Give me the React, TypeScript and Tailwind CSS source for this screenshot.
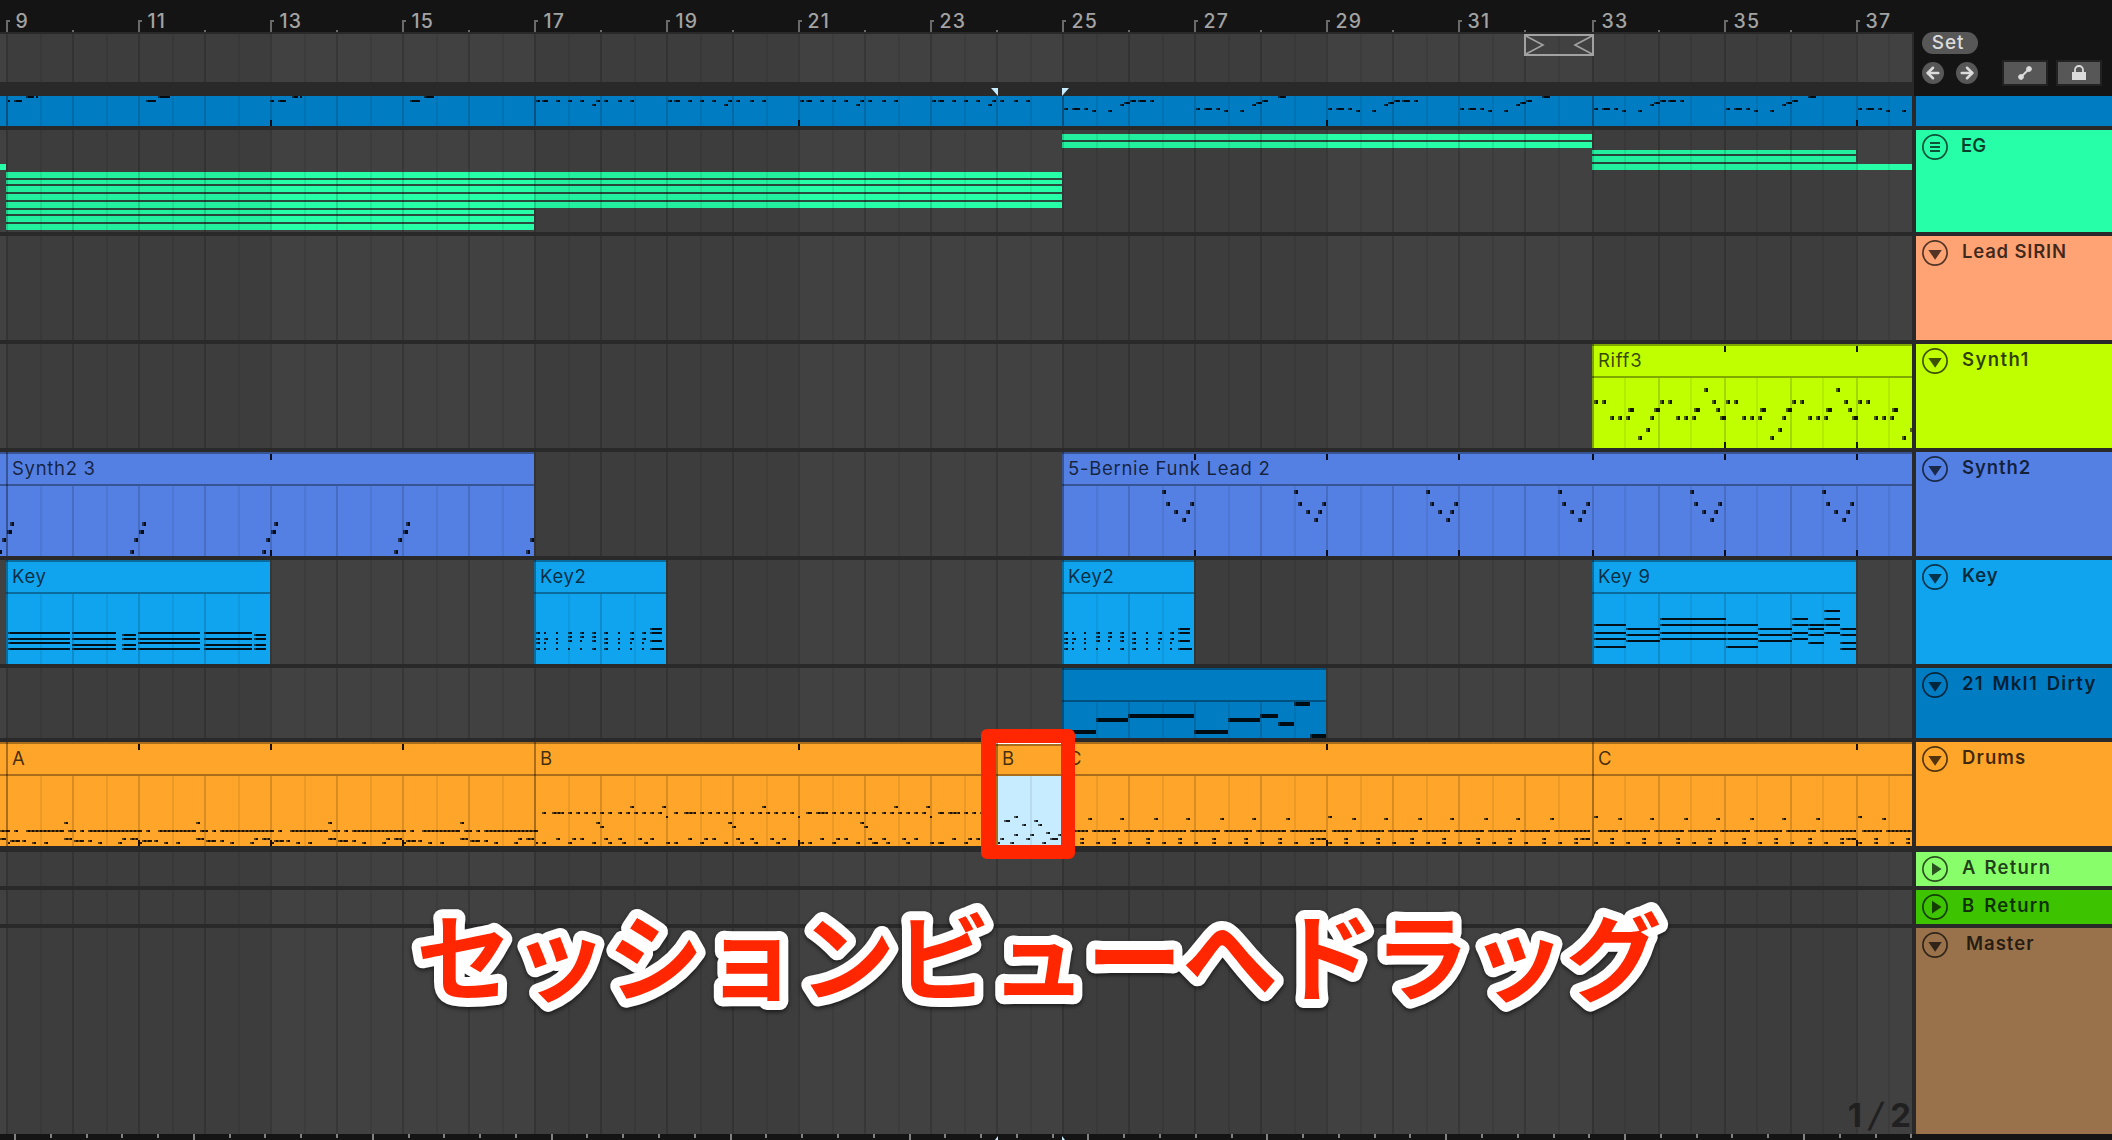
import { ArrowLeft, ArrowRight } from "lucide-react";

// [x, y, width] of one note
type Note = [number, number, number];

type Clip = {
    name?: string;
    start: number;
    end: number;
    bare?: boolean;
    open?: boolean;
    selected?: boolean;
};

type Track = {
    name: string;
    top: number;
    height: number;
    color: string;
    panel: string;
    gap: string;
    label?: string;
    icon?: "down" | "right" | "menu";
    clips?: Clip[];
    notes?: Note[];
    noteHeight?: number;
    ticks?: number[];
};

const LANE_WIDTH = 1912;

const barX = (bar: number) => 2 * Math.floor(3.49 + 33.022 * (bar - 9));

const range = (from: number, to: number, step = 1) => {
    const out: number[] = [];
    for (let i = from; i <= to; i += step) out.push(i);
    return out;
};

const shift = (notes: Note[], dx: number): Note[] => notes.map(([x, y, w]) => [x + dx, y, w]);

const at = (y: number, w: number, xs: number[]): Note[] => xs.map((x) => [x, y, w]);

const roll = (x1: number, x2: number, y: number): Note[] =>
    range(x1, x2 - 2, 4).map((x) => [x, y, Math.min(4, x2 - x)]);

const chord = (x1: number, x2: number, ys: number[]): Note[] => ys.map((y) => [x1, y, x2 - x1]);

// Lead
const leadIntro: Note[] = [
    [8, 100, 2], [14, 100, 8], [26, 96, 8], [36, 96, 2],
    [146, 100, 10], [158, 96, 12],
    [270, 100, 4], [278, 100, 8], [292, 96, 6], [300, 96, 2],
    [410, 100, 10], [424, 96, 10],
];
const leadPulse: Note[] = [
    [2, 100, 4], [8, 100, 6], [22, 100, 4], [34, 100, 4], [46, 100, 4], [58, 104, 4],
    [62, 100, 4], [70, 100, 4], [84, 100, 4], [96, 100, 4],
];
const leadRise: Note[] = [
    [2, 108, 4], [10, 108, 8], [22, 108, 4], [30, 110, 4], [46, 110, 4], [58, 104, 4], [62, 102, 6], [68, 100, 6],
];
const leadNotes: Note[] = [
    ...leadIntro,
    ...[17, 19, 21, 23].flatMap((b) => shift(leadPulse, barX(b))),
    ...[25, 29, 33].flatMap((b) => shift([...leadRise, [76, 100, 8], [88, 100, 4]], barX(b))),
    ...[27, 31, 35].flatMap((b) => shift([...leadRise, [84, 96, 8]], barX(b))),
    ...shift(leadRise.slice(0, 5), barX(37)),
];

// Synth1
const riffNotes: Note[] = [1592, 1724, 1856].flatMap((o) =>
    shift(
        [
            ...at(400, 4, [2, 10, 68, 76, 120]),
            ...at(416, 4, [18, 26, 34, 58, 84, 92, 100]),
            [128, 416, 6],
            [36, 408, 6], [62, 408, 6], [102, 408, 6], [124, 408, 4],
            [112, 388, 4], [46, 436, 4], [54, 428, 4],
        ],
        o
    )
);

// Synth2
const synth2Notes: Note[] = [
    ...[4, 136, 268, 400].flatMap((o) =>
        shift([[6, 522, 4], [3, 530, 5], [-2, 538, 4], [-6, 550, 4]], o)
    ),
    [530, 538, 4], [526, 550, 4],
    ...[1062, 1194, 1326, 1458, 1590, 1722].flatMap((o) =>
        shift(
            [[100, 490, 4], [104, 502, 4], [112, 510, 4], [120, 518, 4], [124, 510, 4], [128, 502, 4]],
            o
        )
    ),
];

// Key
const key2: Note[] = [
    [116, 628, 12],
    ...at(632, 4, [2, 34, 46, 58, 70, 96, 108]), ...at(632, 2, [10, 22, 84]), [116, 632, 12],
    ...at(636, 4, [34, 46, 58]),
    ...at(638, 4, [2, 10, 70, 96, 108]), ...at(638, 2, [22, 84]),
    [34, 640, 4], [46, 640, 2], [58, 640, 4], [116, 640, 12],
    ...at(642, 4, [2, 70]), ...at(642, 2, [10, 22, 84, 96, 108]),
    ...at(648, 4, [2, 58, 70]), ...at(648, 2, [10, 22, 34, 46, 84, 96, 108]), [116, 648, 14],
];
const keyNotes: Note[] = [
    ...chord(8, 70, [632, 638, 642, 648]),
    ...chord(72, 116, [632, 638, 644, 648]),
    ...chord(122, 136, [634, 638, 644, 648]),
    ...chord(138, 200, [632, 638, 642, 648]),
    ...chord(204, 252, [632, 638, 644, 648]),
    ...chord(254, 266, [634, 638, 644, 648]),
    ...shift(key2, 534),
    ...shift(key2, 1062),
    ...chord(1594, 1626, [624, 632, 638, 646]),
    ...chord(1626, 1660, [628, 634, 640]),
    ...chord(1660, 1726, [618, 624, 632, 638]),
    ...chord(1726, 1758, [624, 632, 638, 646]),
    ...chord(1758, 1792, [628, 634, 640]),
    ...chord(1792, 1808, [618, 624, 632, 638]),
    ...chord(1808, 1824, [624, 628, 634, 642]),
    ...chord(1824, 1840, [610, 618, 624, 632]),
    ...chord(1840, 1856, [628, 634, 642, 648]),
];

// 21 MkI1 Dirty
const dirtyNotes: Note[] = [
    [1064, 730, 32], [1096, 718, 32], [1128, 714, 66], [1194, 730, 34], [1228, 718, 32],
    [1260, 714, 18], [1278, 722, 16], [1294, 702, 16], [1310, 734, 16],
];

// Drums
const drumsA: Note[] = [
    [58, 822, 4],
    [8, 830, 4], ...roll(20, 58, 830), ...roll(62, 70, 830), [74, 830, 4], ...roll(82, 136, 830),
    ...roll(58, 66, 838), [116, 838, 4], ...roll(124, 132, 838),
    ...roll(4, 12, 840), [16, 840, 4], ...roll(68, 78, 840), [82, 840, 4],
    [2, 842, 2], [12, 840, 2], [26, 842, 4], [38, 842, 4], [92, 842, 4], [112, 842, 4],
];
const drumsB: Note[] = [
    ...at(806, 4, [630, 662, 762, 894, 926]),
    ...at(812, 4, [542, 568, 576, 584, 592, 600, 608, 618, 626, 634, 642, 650, 658, 674]),
    ...roll(552, 564, 812), ...roll(684, 696, 812), ...roll(806, 812, 812), ...roll(816, 828, 812),
    ...roll(938, 944, 812), ...roll(948, 960, 812),
    ...at(812, 4, [700, 708, 716, 724, 732, 740, 750, 758, 766, 774, 782, 790]),
    ...at(812, 4, [832, 840, 848, 856, 864, 872, 882, 890, 898, 906, 914, 922, 964, 972, 980]),
    ...at(816, 2, [666, 798, 930]),
    ...at(822, 4, [596, 728, 860, 992]),
    ...at(826, 4, [600, 732, 864]),
    ...at(838, 4, [556, 572, 580, 604, 618, 638, 650, 688, 704, 712, 736, 750, 770, 782]),
    ...at(838, 4, [820, 836, 844, 868, 882, 902, 914, 952, 968, 976]),
    ...at(842, 4, [542, 568, 592, 608, 622, 644, 666, 674, 700, 724, 740, 754, 776]),
    ...at(842, 4, [808, 832, 856, 886, 906, 930, 964]),
    [536, 842, 2], [800, 842, 4], [872, 842, 6], [938, 842, 6],
];
const drumsSelected: Note[] = [
    [1014, 816, 4], [1004, 820, 6], [1034, 820, 4], [1022, 824, 4], [1038, 824, 4],
    [1046, 832, 4], [1014, 834, 4], [1030, 834, 4], [1058, 834, 4],
    [1000, 838, 4], [1026, 838, 4], [1050, 838, 8],
    [998, 842, 2], [1010, 842, 4], [1042, 842, 4],
];
const drumsC: Note[] = range(25, 37).flatMap((bar) => {
    const last = (bar - 25) % 4 === 3;
    const first = (bar - 25) % 4 === 0;
    const notes: Note[] = [
        [26, 818, 4],
        ...roll(first ? 6 : 0, 26, 830),
        ...roll(30, 58, 830),
        ...roll(last ? 58 : 62, 66, 830),
        ...at(838, 4, [18, 50]),
        ...at(842, 4, [first ? 2 : 0, 18, 34, 50]),
    ];
    if (!last) notes.push([58, 818, 4]);
    if (last) notes.push([56, 838, 4], [60, 838, 6]);
    if (first) notes.push([2, 816, 4]);
    return shift(notes, barX(bar));
});
const drumsNotes: Note[] = [
    ...roll(0, 10, 830), ...roll(0, 6, 838),
    ...[6, 138, 270, 402].flatMap((o) => shift(drumsA, o)),
    ...drumsB, ...drumsSelected, ...drumsC,
];

// EG: [x1, x2, y, height]
const egBlocks: [number, number, number, number][] = [
    [6, 1062, 172, 36], [6, 534, 208, 22], [1062, 1592, 134, 12], [1592, 1856, 150, 14],
];
const egBars: [number, number, number, number][] = [
    [0, 6, 164, 6],
    [6, 1062, 172, 6], [6, 1062, 180, 4], [6, 1062, 186, 6], [6, 1062, 194, 6], [6, 1062, 202, 6],
    [6, 534, 210, 4], [6, 534, 216, 6], [6, 534, 224, 6],
    [1062, 1592, 134, 6], [1062, 1592, 142, 6],
    [1592, 1856, 150, 4], [1592, 1856, 156, 6], [1592, 1912, 164, 6],
];

const tracks: Track[] = [
    {
        name: "", top: 96, height: 30, color: "#007cc3", panel: "bg-[#007cc3]", gap: "mb-1",
        clips: [{ start: 0, end: 6, bare: true, open: true }, { start: 6, end: 534, bare: true }, { start: 534, end: 1062, bare: true }, { start: 1062, end: 1592, bare: true }, { start: 1592, end: 1912, bare: true }],
        notes: leadNotes, ticks: [13, 21, 29, 37],
    },
    { name: "EG", top: 130, height: 102, color: "#26ffa8", panel: "bg-[#26ffa8]", gap: "mb-1", icon: "menu", label: "ml-[13px]" },
    { name: "Lead SIRIN", top: 236, height: 104, color: "#ffa374", panel: "bg-[#ffa374]", gap: "mb-1", icon: "down", label: "ml-3.5 tracking-[0.8px]" },
    {
        name: "Synth1", top: 344, height: 104, color: "#c0ff00", panel: "bg-[#c0ff00]", gap: "mb-1", icon: "down", label: "ml-3.5 tracking-[1.4px]",
        clips: [{ name: "Riff3", start: 1592, end: 1912 }],
        notes: riffNotes, noteHeight: 4, ticks: [35, 37],
    },
    {
        name: "Synth2", top: 452, height: 104, color: "#5480e4", panel: "bg-[#5480e4]", gap: "mb-1", icon: "down", label: "ml-3.5 tracking-[0.9px]",
        clips: [{ start: 0, end: 6, open: true }, { name: "Synth2 3", start: 6, end: 534 }, { name: "5-Bernie Funk Lead 2", start: 1062, end: 1912 }],
        notes: synth2Notes, noteHeight: 4, ticks: [13, 27, 29, 31, 33, 35, 37],
    },
    {
        name: "Key", top: 560, height: 104, color: "#10a4ee", panel: "bg-[#10a4ee]", gap: "mb-1", icon: "down", label: "ml-3.5 tracking-[0.9px]",
        clips: [{ name: "Key", start: 6, end: 270 }, { name: "Key2", start: 534, end: 666 }, { name: "Key2", start: 1062, end: 1194 }, { name: "Key 9", start: 1592, end: 1856 }],
        notes: keyNotes,
    },
    {
        name: "21 MkI1 Dirty", top: 668, height: 70, color: "#007cc3", panel: "bg-[#007cc3]", gap: "mb-1", icon: "down", label: "ml-3.5 tracking-[1.2px] [word-spacing:3px]",
        clips: [{ start: 1062, end: 1326 }],
        notes: dirtyNotes, noteHeight: 4,
    },
    {
        name: "Drums", top: 742, height: 104, color: "#ffa529", panel: "bg-[#ffa529]", gap: "mb-1.5", icon: "down", label: "ml-3.5 tracking-[1.1px]",
        clips: [{ start: 0, end: 6, open: true }, { name: "A", start: 6, end: 534 }, { name: "B", start: 534, end: 996 }, { name: "B", start: 996, end: 1062, selected: true }, { name: "C", start: 1062, end: 1592 }, { name: "C", start: 1592, end: 1912 }],
        notes: drumsNotes, ticks: [11, 13, 15, 21, 29, 37],
    },
    { name: "A Return", top: 852, height: 34, color: "#88ff6a", panel: "bg-[#88ff6a]", gap: "mb-1", icon: "right", label: "ml-3.5 tracking-[1.2px] [word-spacing:2px]" },
    { name: "B Return", top: 890, height: 34, color: "#3dc300", panel: "bg-[#3dc300]", gap: "mb-1", icon: "right", label: "ml-3.5 tracking-[1.2px] [word-spacing:3px]" },
    { name: "Master", top: 928, height: 206, color: "#99724b", panel: "bg-[#99724b]", gap: "", icon: "down", label: "ml-[18px] tracking-[1px]" },
];

function GridLines({ top, height, x1 = -1, x2 = LANE_WIDTH }: { top: number; height: number; x1?: number; x2?: number }) {
    return (
        <>
            {range(9, 38).map((bar) => (
                <g key={bar}>
                    {barX(bar) > x1 && barX(bar) < x2 && (
                        <rect x={barX(bar)} y={top} width={2} height={height} fill="#000" opacity={0.15} />
                    )}
                    {barX(bar + 0.5) > x1 && barX(bar + 0.5) < x2 && (
                        <rect x={barX(bar + 0.5)} y={top} width={2} height={height} fill="#000" opacity={0.07} />
                    )}
                </g>
            ))}
        </>
    );
}

function Shade({ top, height }: { top: number; height: number }) {
    return (
        <>
            {[9, 17, 25, 33].map((bar) => (
                <rect key={bar} x={barX(bar)} y={top} width={barX(bar + 4) - barX(bar)} height={height} fill="#000" opacity={0.06} />
            ))}
        </>
    );
}

function Lane({ track }: { track: Track }) {
    const { top, height, color, clips = [], notes = [], noteHeight = 2, ticks = [] } = track;
    return (
        <svg
            className="block"
            width={LANE_WIDTH}
            height={height}
            viewBox={`0 ${top} ${LANE_WIDTH} ${height}`}
            shapeRendering="crispEdges"
        >
            <rect x={0} y={top} width={LANE_WIDTH} height={height} fill="#414141" />
            {track.name === "EG" && (
                <>
                    {egBlocks.map(([a, b, y, h]) => (
                        <rect key={`${a}-${y}`} x={a} y={y} width={b - a} height={h} fill="#2a4b3d" />
                    ))}
                    {egBars.map(([a, b, y, h]) => (
                        <rect key={`${a}-${y}`} x={a} y={y} width={b - a} height={h} fill={color} />
                    ))}
                </>
            )}
            <Shade top={top} height={height} />
            <GridLines top={top} height={height} />

            {clips.map((clip) => {
                const bodyTop = clip.bare ? top : top + 34;
                return (
                    <g key={clip.start}>
                        <rect x={clip.start} y={top} width={clip.end - clip.start} height={height} fill={color} />
                        {clip.selected && (
                            <rect x={clip.start + 2} y={bodyTop} width={clip.end - clip.start - 2} height={height - 34} fill="#c8ecff" />
                        )}
                        <GridLines top={bodyTop} height={top + height - bodyTop} x1={clip.start} x2={clip.end} />
                        {!clip.bare && (
                            <g fill="#000" opacity={0.34}>
                                <rect x={clip.start} y={clip.selected ? top + 2 : top} width={clip.end - clip.start} height={2} />
                                <rect x={clip.start} y={top + 32} width={clip.end - clip.start} height={2} />
                            </g>
                        )}
                        {clip.selected && <rect x={clip.start} y={top + 1} width={clip.end - clip.start} height={1} fill="#fff" />}
                        {!clip.open && <rect x={clip.start} y={top} width={2} height={height} fill="#000" opacity={0.34} />}
                        {clip.name && (
                            <text x={clip.start + 6} y={top + 23.3} className="text-[18.5px] tracking-[0.7px]" fill="#000" fillOpacity={0.74}>
                                {clip.name}
                            </text>
                        )}
                    </g>
                );
            })}

            {notes.map(([x, y, w], i) => (
                <g key={i} fill="#000">
                    <rect x={x} y={y} width={Math.min(2, w)} height={noteHeight} opacity={w > 2 ? 0.6 : 0.85} />
                    {w > 2 && <rect x={x + 2} y={y} width={w - 2} height={noteHeight} opacity={0.9} />}
                </g>
            ))}

            {ticks.map((bar) => (
                <g key={bar} fill="#000" opacity={0.9}>
                    {height > 30 && <rect x={barX(bar)} y={top + 2} width={2} height={6} />}
                    <rect x={barX(bar)} y={top + height - 6} width={2} height={6} />
                </g>
            ))}
        </svg>
    );
}

function FoldIcon({ kind }: { kind: "down" | "right" | "menu" }) {
    return (
        <svg className="mt-1 h-[26px] w-[26px] shrink-0" viewBox="0 0 26 26" opacity={0.68}>
            <circle cx="13" cy="13" r="12.1" fill="none" stroke="#000" strokeWidth="1.7" />
            {kind === "down" && <path d="M6.4 10h13.4l-6.7 9.8z" />}
            {kind === "right" && <path d="M10 6.8v12.6l9.6-6.3z" />}
            {kind === "menu" && <path d="M8 8h10v2H8zM8 12h10v2H8zM8 16h10v2H8z" />}
        </svg>
    );
}

function Ruler() {
    return (
        <svg className="block bg-[#141414]" width={1914} height={32} shapeRendering="crispEdges">
            {range(9, 37, 2).map((bar) => (
                <g key={bar}>
                    <path d={`M${barX(bar)} 32V20h4v2h-2v10z`} fill="#6a6a6a" />
                    <rect x={barX(bar + 1)} y={30} width={2} height={2} fill="#6a6a6a" />
                    <text x={barX(bar) + 9.5} y={28} className="text-[19.5px] font-medium tracking-[1.2px]" fill="#a3a3a3">
                        {bar}
                    </text>
                </g>
            ))}
        </svg>
    );
}

function Locators() {
    return (
        <svg className="mt-0.5 block" width={1914} height={62}>
            <g shapeRendering="crispEdges">
                <rect width={LANE_WIDTH} height={48} fill="#414141" />
                <Shade top={0} height={48} />
                <GridLines top={0} height={48} />
            </g>
            <g fill="none" stroke="#a2a2a2">
                <rect x={1525} y={1} width={68} height={20} strokeWidth={2} />
                <path d="M1526 2L1543 11L1526 20M1592 2L1575 11L1592 20" strokeWidth={1.6} />
            </g>
            <path d="M991 54h7v8zM1062 54h7l-7 8z" fill="#c8ecff" />
        </svg>
    );
}

function Controls() {
    return (
        <div className="flex-1 bg-[#141414] pt-8 pl-2">
            <div className="flex h-[22px] w-14 items-center justify-center rounded-full bg-[#575757] pr-1 text-[19px] font-medium tracking-[0.8px] text-[#dcdcdc]">
                Set
            </div>
            <div className="mt-2 flex h-[22px]">
                <div className="flex w-[22px] items-center justify-center rounded-full bg-[#575757] text-[#dcdcdc]">
                    <ArrowLeft size={18} strokeWidth={3.4} />
                </div>
                <div className="ml-3 flex w-[22px] items-center justify-center rounded-full bg-[#575757] text-[#dcdcdc]">
                    <ArrowRight size={18} strokeWidth={3.4} />
                </div>
                <div className="ml-[26px] flex w-[42px] items-center justify-center bg-[#575757] outline-2 outline-[#222222]">
                    <svg width="16" height="16" viewBox="0 0 16 16" fill="#dcdcdc" stroke="#dcdcdc">
                        <path d="M3.5 12.5L12.5 3.5" strokeWidth="1.8" />
                        <circle cx="4" cy="12" r="2.4" />
                        <circle cx="12" cy="4" r="2.4" />
                    </svg>
                </div>
                <div className="ml-3 flex w-[42px] items-center justify-center bg-[#575757] outline-2 outline-[#222222]">
                    <svg width="14" height="16" viewBox="0 0 14 16">
                        <path d="M3 8V5a4 4 0 0 1 8 0v3" fill="none" stroke="#dcdcdc" strokeWidth="1.8" />
                        <rect y="7" width="14" height="8" fill="#dcdcdc" />
                    </svg>
                </div>
            </div>
        </div>
    );
}

function TimeRuler() {
    return (
        <svg className="block bg-[#141414]" width={2112} height={6}>
            {range(0, 53).map((i) => (
                <rect
                    key={i}
                    x={Math.round(14 + 35.78 * i)}
                    y={0}
                    width={2}
                    height={i % 5 === 0 ? 6 : 4}
                    fill="#828282"
                    shapeRendering="crispEdges"
                />
            ))}
            <path d="M998 2v4h-3zM1062 2v4h3z" fill="#c8ecff" />
        </svg>
    );
}

export default function App() {
    return (
        <div className="relative flex h-[1140px] w-[2112px] flex-col overflow-hidden bg-[#292929] font-['Inter',sans-serif]">
            <div className="flex h-24">
                <div className="w-[1914px]">
                    <Ruler />
                    <Locators />
                </div>
                <Controls />
            </div>

            {tracks.map((track) => (
                <div key={track.top} className={`flex gap-1 ${track.gap}`}>
                    <Lane track={track} />
                    <div className={`flex flex-1 items-start pl-1.5 ${track.panel}`}>
                        {track.icon && <FoldIcon kind={track.icon} />}
                        <span className={`text-[18.5px] leading-[31px] font-semibold whitespace-nowrap text-black/75 ${track.label ?? ""}`}>
                            {track.name}
                        </span>
                    </div>
                </div>
            ))}

            <TimeRuler />

            <div className="absolute top-[1094px] right-[201px] flex text-[33px] leading-[42px] font-bold text-[#202020]">
                <span>1</span>
                <span className="mx-2 -skew-x-12 font-medium">/</span>
                <span>2</span>
            </div>

            <svg className="absolute top-[729px] left-[981px]" width="94" height="130">
                <path
                    fillRule="evenodd"
                    fill="#ff2600"
                    d="M6 0h82a6 6 0 0 1 6 6v118a6 6 0 0 1-6 6H6a6 6 0 0 1-6-6V6a6 6 0 0 1 6-6zM15 14v102h65V14z"
                />
            </svg>

            <svg className="absolute top-[880px] left-[380px] drop-shadow-[0_2px_2px_rgba(0,0,0,0.6)]" width="1320" height="160">
                <text
                    x="36"
                    y="113.5"
                    className="font-['Noto_Sans_CJK_JP',sans-serif] text-[95.8px] font-bold"
                    fill="#ff2600"
                    stroke="#fff"
                    strokeWidth="18"
                    strokeLinejoin="round"
                    paintOrder="stroke"
                >
                    セッションビューへドラッグ
                </text>
            </svg>
        </div>
    );
}
